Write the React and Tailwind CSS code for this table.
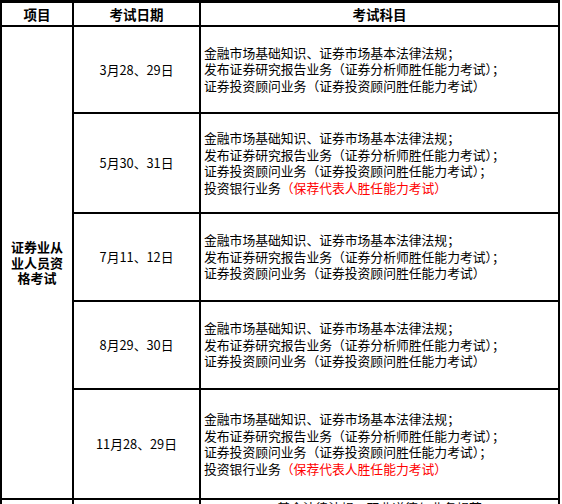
const subjects = [
  { date: '3月28、29日', bank: false },
  { date: '5月30、31日', bank: true },
  { date: '7月11、12日', bank: false },
  { date: '8月29、30日', bank: false },
  { date: '11月28、29日', bank: true },
];

const rowStarts = ['row-start-2', 'row-start-3', 'row-start-4', 'row-start-5', 'row-start-6'];

const Subjects = ({ bank }) => (
  <div className="whitespace-nowrap">
    <div>金融市场基础知识、证券市场基本法律法规；</div>
    <div>发布证券研究报告业务（证券分析师胜任能力考试）；</div>
    <div>
      证券投资顾问业务（证券投资顾问胜任能力考试）{bank ? '；' : ''}
    </div>
    {bank && (
      <div>
        投资银行业务<span className="text-[#ff0000]">（保荐代表人胜任能力考试）</span>
      </div>
    )}
  </div>
);

const App = () => {
  return (
    <div className="w-[562px] h-[504px] overflow-hidden bg-white font-['Noto_Sans_CJK_SC',sans-serif] text-black">
      <div className="w-[560px] bg-black pt-[3px] px-[2px] grid grid-cols-[70px_125px_357px] grid-rows-[22px_85px_98px_86px_86px_108px_40px] gap-[2px]">
        {/* header */}
        <div className="bg-white flex items-center justify-center text-[13.5px] font-bold">项目</div>
        <div className="bg-white flex items-center justify-center text-[13.5px] font-bold">考试日期</div>
        <div className="bg-white flex items-center justify-center text-[13.5px] font-bold">考试科目</div>

        {/* group cell */}
        <div className="bg-white row-span-5 flex items-center justify-center text-center text-[13px] font-bold leading-[15.5px]">
          <div>
            证券业从<br />
            业人员资<br />
            格考试
          </div>
        </div>

        {subjects.map((s, i) => (
          <div key={i} className="contents">
            <div className={`bg-white flex items-center justify-center text-[12.8px] col-start-2 ${rowStarts[i]}`}>
              {s.date}
            </div>
            <div className={`bg-white flex items-center pl-[3px] text-[12.8px] leading-[16.5px] col-start-3 ${rowStarts[i]}`}>
              <Subjects bank={s.bank} />
            </div>
          </div>
        ))}

        {/* next section, cut off by the window */}
        <div className="bg-white"></div>
        <div className="bg-white"></div>
        <div className="bg-white text-center text-[12.8px] leading-[14px] pt-[1px] whitespace-nowrap">
          基金法律法规、职业道德与业务规范
        </div>
      </div>
    </div>
  );
};

export default App;
